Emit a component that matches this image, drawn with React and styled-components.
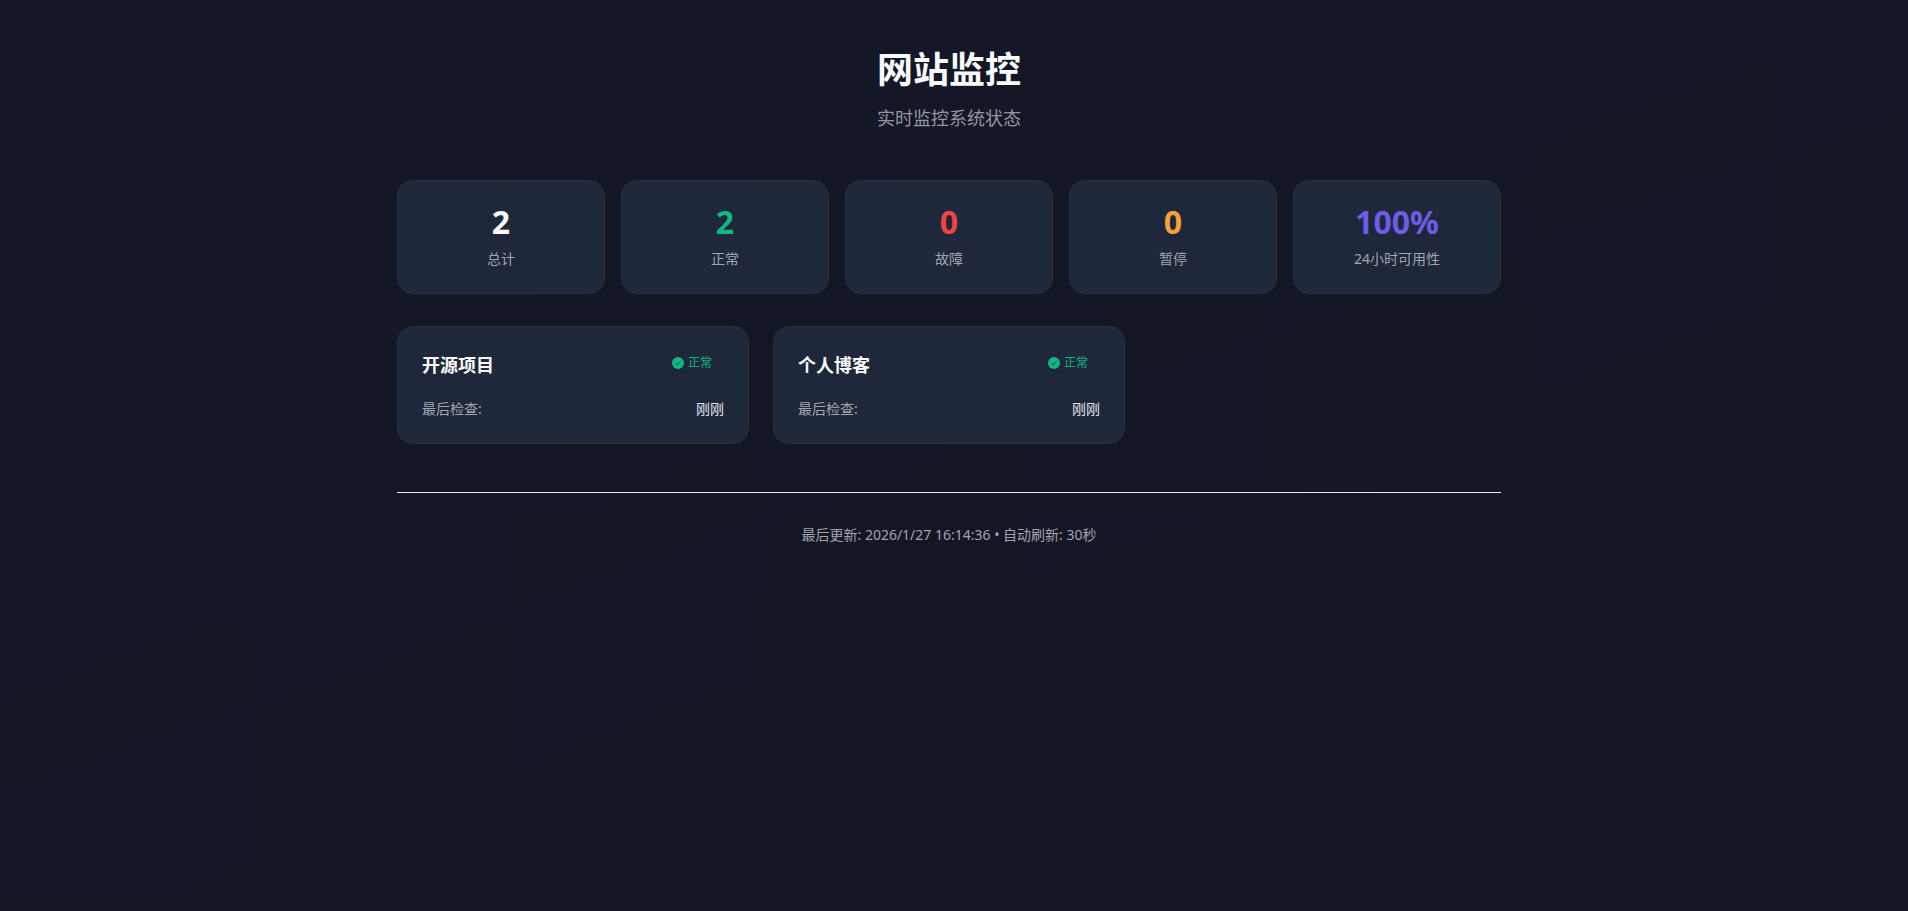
import React from "react";
import styled, { createGlobalStyle } from "styled-components";

const GlobalStyle = createGlobalStyle`
  * { box-sizing: border-box; }
  html { background: #131724; }
  body {
    margin: 0;
    min-height: 100vh;
    padding-right: 10px;
    background: linear-gradient(160deg, #141826 0%, #131724 100%);
    color: #f8fafc;
    font-family: "Noto Sans", "Noto Sans CJK SC", sans-serif;
    font-size: 14px;
    line-height: 20px;
  }
  h1, h2, p { margin: 0; }
`;

const Page = styled.main`
  max-width: 1200px;
  margin: 0 auto;
  padding: 48px;
`;

const Header = styled.header`
  margin-bottom: 46px;
  text-align: center;
`;

const Title = styled.h1`
  margin-bottom: 10px;
  font-size: 36px;
  font-weight: 700;
  line-height: 44px;
`;

const Subtitle = styled.p`
  color: #94979f;
  font-size: 18px;
  line-height: 32px;
`;

const Card = styled.article`
  padding: 24px;
  border: 1px solid #272f45;
  border-radius: 16px;
  background: #1f273a;
`;

const Stats = styled.section`
  display: grid;
  grid-template-columns: repeat(5, 1fr);
  gap: 16px;
  margin-bottom: 32px;
`;

const StatCard = styled(Card)`
  text-align: center;
`;

const StatValue = styled.p`
  margin-bottom: 10px;
  color: ${(p) => p.$color};
  font-size: 32px;
  font-weight: 700;
  line-height: 34px;
`;

const Muted = styled.p`
  color: #a0a5b0;
`;

const Services = styled.section`
  display: grid;
  grid-template-columns: repeat(3, 1fr);
  gap: 24px;
`;

const ServiceHead = styled.div`
  display: flex;
  align-items: flex-start;
  justify-content: space-between;
  margin-bottom: 20px;
`;

const ServiceName = styled.h2`
  font-size: 18px;
  font-weight: 700;
  line-height: 28px;
`;

const Badge = styled.span`
  display: inline-flex;
  align-items: center;
  gap: 4px;
  padding: 2px 12px;
  color: #10b981;
  font-size: 12px;
`;

const Row = styled.div`
  display: flex;
  justify-content: space-between;
`;

const RowValue = styled.span`
  color: #e2e8f0;
`;

const Footer = styled.footer`
  margin-top: 48px;
  padding-top: 32px;
  border-top: 1px solid #e2e8f0;
  text-align: center;
`;

const CheckIcon = () => (
  <svg width="12" height="12" viewBox="0 0 12 12" aria-hidden="true">
    <circle cx="6" cy="6" r="6" fill="#10b981" />
    <path d="M3.5 6.2 5.2 7.8 8.4 4.6" fill="none" stroke="#1f273a" strokeWidth="1" />
  </svg>
);

const stats = [
  { label: "总计", value: "2", color: "#f8fafc" },
  { label: "正常", value: "2", color: "#10b981" },
  { label: "故障", value: "0", color: "#ef4444" },
  { label: "暂停", value: "0", color: "#f6a03a" },
  { label: "24小时可用性", value: "100%", color: "#6c5ce7" },
];

const services = [
  { name: "开源项目", status: "正常", checked: "刚刚" },
  { name: "个人博客", status: "正常", checked: "刚刚" },
];

export default function App() {
  return (
    <>
      <GlobalStyle />
      <Page lang="zh-CN">
        <Header>
          <Title>网站监控</Title>
          <Subtitle>实时监控系统状态</Subtitle>
        </Header>
        <Stats>
          {stats.map((s) => (
            <StatCard key={s.label}>
              <StatValue $color={s.color}>{s.value}</StatValue>
              <Muted>{s.label}</Muted>
            </StatCard>
          ))}
        </Stats>
        <Services>
          {services.map((s) => (
            <Card key={s.name}>
              <ServiceHead>
                <ServiceName>{s.name}</ServiceName>
                <Badge>
                  <CheckIcon />
                  {s.status}
                </Badge>
              </ServiceHead>
              <Row>
                <Muted>最后检查:</Muted>
                <RowValue>{s.checked}</RowValue>
              </Row>
            </Card>
          ))}
        </Services>
        <Footer>
          <Muted>最后更新: 2026/1/27 16:14:36 • 自动刷新: 30秒</Muted>
        </Footer>
      </Page>
    </>
  );
}
